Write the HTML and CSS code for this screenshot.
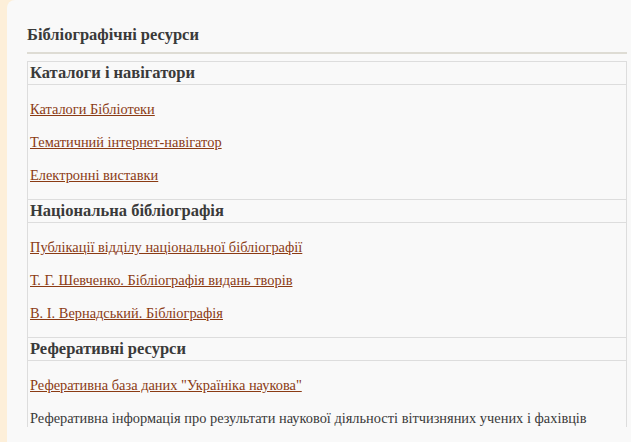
FILE: index.html
```html
<!DOCTYPE html>
<html lang="uk">
  <head>
    <meta charset="UTF-8" />
    <meta name="viewport" content="width=device-width, initial-scale=1.0" />
    <title>Бібліографічні ресурси</title>
    <link rel="stylesheet" href="styles.css">
  </head>
  <body>
    <div class="panel">
      <h2>Бібліографічні ресурси</h2>
      <hr />
      <div class="box">
        <div class="section-head">Каталоги і навігатори</div>
        <div class="section-body">
          <p><a href="#">Каталоги Бібліотеки</a></p>
          <p><a href="#">Тематичний інтернет-навігатор</a></p>
          <p><a href="#">Електронні виставки</a></p>
        </div>
        <div class="section-head">Національна бібліографія</div>
        <div class="section-body">
          <p><a href="#">Публікації відділу національної бібліографії</a></p>
          <p><a href="#">Т. Г. Шевченко. Бібліографія видань творів</a></p>
          <p><a href="#">В. І. Вернадський. Бібліографія</a></p>
        </div>
        <div class="section-head">Реферативні ресурси</div>
        <div class="section-body">
          <p><a href="#">Реферативна база даних "Україніка наукова"</a></p>
          <p>Реферативна інформація про результати наукової діяльності вітчизняних учених і фахівців</p>
        </div>
      </div>
    </div>
  </body>
</html>
```

FILE: styles.css
```css
body {
  margin: 0;
  background-color: #fdefd9; /* beige strip on the left */
  font-family: "Liberation Serif", "Times New Roman", serif;
  color: #3a3a3a;
}

.panel {
  margin-left: 7px;
  padding: 25px 4px 0 20px;
  background-color: #f9f9f9;
  border-radius: 8px 0 0 0;
  min-height: 100vh;
}

h2 {
  margin: 0;
  font-size: 16.5px;
  line-height: 20px;
  font-weight: bold;
  color: #3a3a3a;
}

hr {
  margin: 7px 0 7px 0;
  border: none;
  border-top: 2px solid #dedcd4;
}

.box {
  border: 1px solid #dddddd;
  border-bottom: none;
}

.section-head {
  padding: 1px 2px;
  line-height: 20px;
  font-size: 16.5px;
  font-weight: bold;
  border-bottom: 1px solid #dddddd;
}

.section-body + .section-head {
  border-top: 1px solid #dddddd;
}

.section-body p {
  margin: 15px 2px;
  font-size: 14.4px;
  line-height: 18px;
}

.section-body a {
  color: #8b3b14;
  text-decoration: underline;
}
```
